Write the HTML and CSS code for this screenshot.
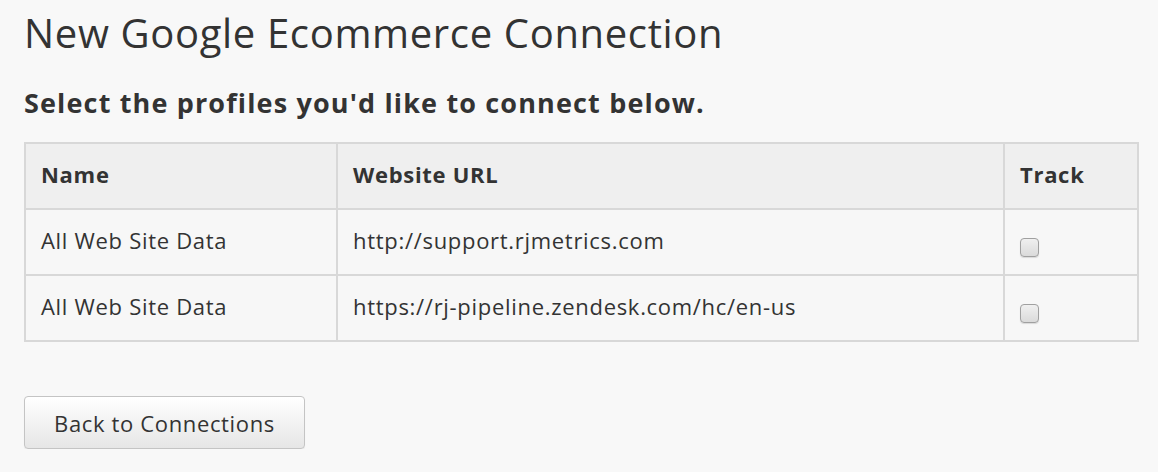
FILE: index.html
```html
<!DOCTYPE html>
<html>
<head>
<meta charset="utf-8">
<link rel="stylesheet" href="styles.css">
</head>
<body>
<div class="page">
  <h1 class="title">New Google Ecommerce Connection</h1>
  <h2 class="subtitle">Select the profiles you'd like to connect below.</h2>
  <table class="profiles">
    <thead>
      <tr>
        <th class="col-name">Name</th>
        <th class="col-url">Website URL</th>
        <th class="col-track">Track</th>
      </tr>
    </thead>
    <tbody>
      <tr>
        <td>All Web Site Data</td>
        <td>http://support.rjmetrics.com</td>
        <td><span class="checkbox"></span></td>
      </tr>
      <tr>
        <td>All Web Site Data</td>
        <td>https://rj-pipeline.zendesk.com/hc/en-us</td>
        <td><span class="checkbox"></span></td>
      </tr>
    </tbody>
  </table>
  <button class="btn">Back to Connections</button>
</div>
</body>
</html>
```

FILE: styles.css
```css
html, body {
  margin: 0;
  padding: 0;
  background: #f8f8f8;
}
body {
  font-family: "Open Sans", "Lato", sans-serif;
  color: #333;
}
.page {
  padding: 0 19px 0 24px;
  display: flex;
  flex-direction: column;
  align-items: flex-start;
}
.title {
  margin: 8px 0 0 0;
  font-size: 40px;
  font-weight: 400;
  letter-spacing: 0.65px;
  line-height: 50px;
  color: #333;
}
.subtitle {
  margin: 28px 0 0 0;
  font-size: 27px;
  font-weight: 700;
  letter-spacing: 1.15px;
  line-height: 34px;
  color: #333;
}
.profiles {
  margin-top: 22px;
  width: 1115px;
  border-collapse: collapse;
  border: 2px solid #d8d8d8;
  font-size: 22px;
  letter-spacing: 0.7px;
}
.profiles th, .profiles td {
  border: 2px solid #d8d8d8;
  padding: 0 15px;
  text-align: left;
  vertical-align: middle;
}
.profiles th {
  background: #efefef;
  font-weight: 700;
  height: 60px;
  padding-bottom: 4px;
}
.profiles td {
  background: #f7f7f7;
  height: 59px;
  padding-bottom: 5px;
}
.col-name { width: 280px; }
.col-track { width: 102px; }
.checkbox {
  display: inline-block;
  box-sizing: border-box;
  width: 19px;
  height: 19px;
  border: 1px solid #a0a0a0;
  border-radius: 4px;
  background: linear-gradient(#f0f0f0, #dadada);
  box-shadow: 0 1px 1px rgba(0,0,0,0.12);
  vertical-align: middle;
  margin-top: 16px;
}
.btn {
  margin-top: 54px;
  width: 281px;
  height: 53px;
  font-family: inherit;
  font-size: 22px;
  letter-spacing: 0.65px;
  color: #333;
  border: 1px solid #c4c4c4;
  border-radius: 4px;
  background: linear-gradient(#ffffff, #e6e6e6);
  box-shadow: 0 1px 1px rgba(0,0,0,0.06);
}
```
